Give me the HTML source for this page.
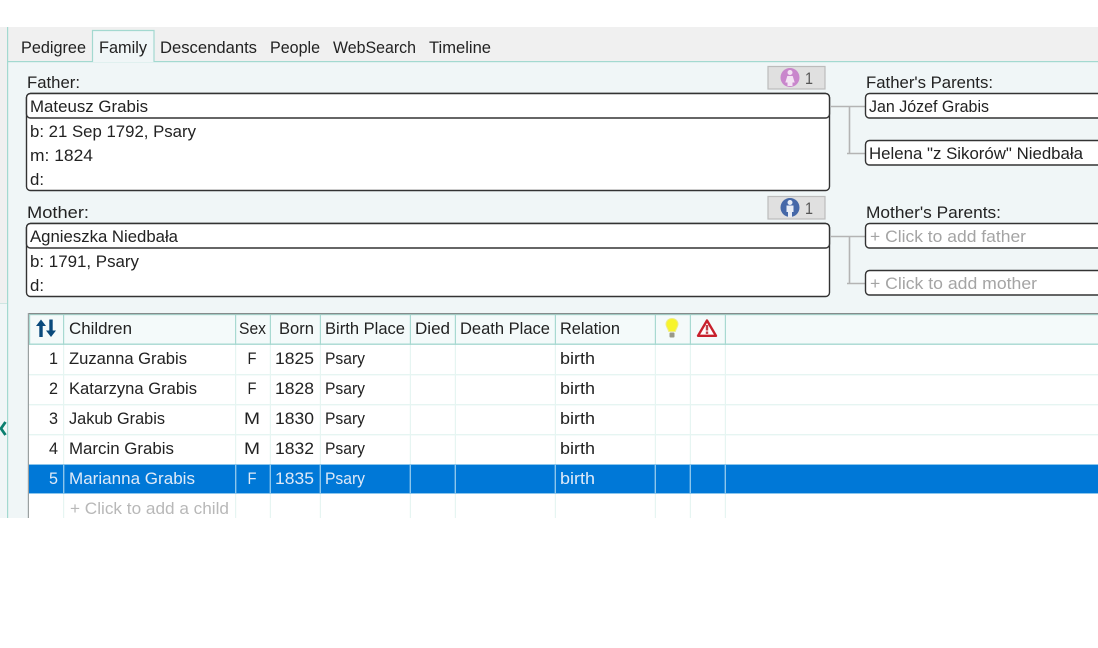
<!DOCTYPE html>
<html><head><meta charset="utf-8"><style>
html,body{margin:0;padding:0;background:#fff;width:1098px;height:648px;overflow:hidden}
svg{display:block}
text{font-family:"Liberation Sans",sans-serif;font-size:17px;fill:#222}
.p{fill:#a4a4a4}
.w{fill:#dfeaf8}
</style></head><body>
<svg width="1098" height="648" viewBox="0 0 1098 648" xmlns="http://www.w3.org/2000/svg">
<rect width="1098" height="648" fill="#fff"/>
<!-- backgrounds -->
<rect x="0" y="27" width="1098" height="34" fill="#f0f0f0"/>
<rect x="8" y="61" width="1090" height="457" fill="#f0f6f7"/>
<rect x="0" y="27" width="7" height="276" fill="#f0f0f0"/>
<rect x="0" y="303" width="7" height="215" fill="#f0f6f7"/>
<rect x="0" y="303" width="7" height="1" fill="#cfe6e2"/>
<rect x="7" y="27" width="1.2" height="491" fill="#a3d9d0"/>
<rect x="8" y="61" width="1090" height="1.200" fill="#a3d9d0"/>
<!-- active tab -->
<path d="M92.500 62V30.500H154V62" fill="#f0f6f7" stroke="#a3d9d0" stroke-width="1.200"/>
<text x="21" y="53" textLength="65" lengthAdjust="spacingAndGlyphs">Pedigree</text>
<text x="99" y="53" textLength="48" lengthAdjust="spacingAndGlyphs">Family</text>
<text x="160" y="53" textLength="97" lengthAdjust="spacingAndGlyphs">Descendants</text>
<text x="270" y="53" textLength="50" lengthAdjust="spacingAndGlyphs">People</text>
<text x="333" y="53" textLength="83" lengthAdjust="spacingAndGlyphs">WebSearch</text>
<text x="429" y="53" textLength="62" lengthAdjust="spacingAndGlyphs">Timeline</text>

<!-- Father -->
<text x="27" y="88" textLength="53" lengthAdjust="spacingAndGlyphs">Father:</text>
<rect x="26.500" y="93.500" width="803" height="97" rx="4" fill="#fff" stroke="#333" stroke-width="1.400"/>
<rect x="26.500" y="93.500" width="803" height="24.500" rx="4" fill="#fff" stroke="#333" stroke-width="1.400"/>
<text x="30" y="112" textLength="118" lengthAdjust="spacingAndGlyphs">Mateusz Grabis</text>
<text x="30" y="137" textLength="166" lengthAdjust="spacingAndGlyphs">b: 21 Sep 1792, Psary</text>
<text x="30" y="161" textLength="63" lengthAdjust="spacingAndGlyphs">m: 1824</text>
<text x="30" y="185" textLength="14" lengthAdjust="spacingAndGlyphs">d:</text>
<rect x="768" y="66.500" width="57" height="22.500" fill="#e0e0e0" stroke="#bcbcbc" stroke-width="1.200"/>
<circle cx="790" cy="77.500" r="9.500" fill="#c986cc"/>
<circle cx="790" cy="72.500" r="2.500" fill="#f3e3f3"/>
<path d="M787.300 76h5.400l2 6.500h-2.200v3.500h-5v-3.500h-2.200z" fill="#f3e3f3"/>
<text x="805" y="84" textLength="8" lengthAdjust="spacingAndGlyphs" style="fill:#555">1</text>

<!-- Father's parents -->
<text x="866" y="88" textLength="127" lengthAdjust="spacingAndGlyphs">Father's Parents:</text>
<path d="M831 106.500H865M849.500 106.500V153.500M847 153.500H865" fill="none" stroke="#b4b4b4" stroke-width="1.600"/>
<rect x="865.500" y="93.500" width="260" height="24.500" rx="4" fill="#fff" stroke="#333" stroke-width="1.400"/>
<rect x="865.500" y="140.500" width="260" height="24.500" rx="4" fill="#fff" stroke="#333" stroke-width="1.400"/>
<text x="869" y="112" textLength="120" lengthAdjust="spacingAndGlyphs">Jan Józef Grabis</text>
<text x="869" y="159" textLength="214" lengthAdjust="spacingAndGlyphs">Helena "z Sikorów" Niedbała</text>

<!-- Mother -->
<text x="27" y="218" textLength="62" lengthAdjust="spacingAndGlyphs">Mother:</text>
<rect x="26.500" y="223.500" width="803" height="73" rx="4" fill="#fff" stroke="#333" stroke-width="1.400"/>
<rect x="26.500" y="223.500" width="803" height="24.500" rx="4" fill="#fff" stroke="#333" stroke-width="1.400"/>
<text x="30" y="242" textLength="148" lengthAdjust="spacingAndGlyphs">Agnieszka Niedbała</text>
<text x="30" y="267" textLength="109" lengthAdjust="spacingAndGlyphs">b: 1791, Psary</text>
<text x="30" y="291" textLength="14" lengthAdjust="spacingAndGlyphs">d:</text>
<rect x="768" y="196.500" width="57" height="22.500" fill="#e0e0e0" stroke="#bcbcbc" stroke-width="1.200"/>
<circle cx="790" cy="207.500" r="9.500" fill="#4568a8"/>
<circle cx="790" cy="202.500" r="2.500" fill="#e8edf6"/>
<path d="M786.500 205.500h7v6.500h-1.500v5h-4v-5h-1.500z" fill="#e8edf6"/>
<text x="805" y="214" textLength="8" lengthAdjust="spacingAndGlyphs" style="fill:#555">1</text>

<!-- Mother's parents -->
<text x="866" y="218" textLength="135" lengthAdjust="spacingAndGlyphs">Mother's Parents:</text>
<path d="M831 236.500H865M849.500 236.500V283.500M847 283.500H865" fill="none" stroke="#b4b4b4" stroke-width="1.600"/>
<rect x="865.500" y="223.500" width="260" height="24.500" rx="4" fill="#fff" stroke="#333" stroke-width="1.400"/>
<rect x="865.500" y="270.500" width="260" height="24.500" rx="4" fill="#fff" stroke="#333" stroke-width="1.400"/>
<text class="p" x="870" y="242" textLength="156" lengthAdjust="spacingAndGlyphs">+ Click to add father</text>
<text class="p" x="870" y="289" textLength="167" lengthAdjust="spacingAndGlyphs">+ Click to add mother</text>

<!-- Table -->
<rect x="28" y="314" width="1070" height="204" fill="#fff"/>
<rect x="29" y="314" width="1069" height="30" fill="#f4fafa"/>
<rect x="28" y="465" width="1070" height="28" fill="#0078d7"/>
<g fill="#e6f5f2">
<rect x="28" y="374" width="1070" height="1.400"/>
<rect x="28" y="404" width="1070" height="1.400"/>
<rect x="28" y="434" width="1070" height="1.400"/>
<rect x="63" y="345" width="1.200" height="173"/>
<rect x="235" y="345" width="1.200" height="173"/>
<rect x="269.800" y="345" width="1.200" height="173"/>
<rect x="319.800" y="345" width="1.200" height="173"/>
<rect x="409.800" y="345" width="1.200" height="173"/>
<rect x="454.800" y="345" width="1.200" height="173"/>
<rect x="554.800" y="345" width="1.200" height="173"/>
<rect x="654.800" y="345" width="1.200" height="173"/>
<rect x="689.800" y="345" width="1.200" height="173"/>
<rect x="724.800" y="345" width="1.200" height="173"/>
</g>
<g fill="#8cc6ec">
<rect x="28" y="464" width="1070" height="1"/>
<rect x="28" y="493" width="1070" height="1"/>
<rect x="63" y="465" width="1.200" height="28"/>
<rect x="235" y="465" width="1.200" height="28"/>
<rect x="269.800" y="465" width="1.200" height="28"/>
<rect x="319.800" y="465" width="1.200" height="28"/>
<rect x="409.800" y="465" width="1.200" height="28"/>
<rect x="454.800" y="465" width="1.200" height="28"/>
<rect x="554.800" y="465" width="1.200" height="28"/>
<rect x="654.800" y="465" width="1.200" height="28"/>
<rect x="689.800" y="465" width="1.200" height="28"/>
<rect x="724.800" y="465" width="1.200" height="28"/>
</g>
<g fill="#a8d9d1">
<rect x="29" y="314" width="1069" height="1.200"/>
<rect x="28" y="343.500" width="1070" height="1.400"/>
<rect x="29" y="314" width="1.200" height="31"/>
<rect x="63" y="314" width="1.200" height="31"/>
<rect x="235" y="314" width="1.200" height="31"/>
<rect x="269.800" y="314" width="1.200" height="31"/>
<rect x="319.800" y="314" width="1.200" height="31"/>
<rect x="409.800" y="314" width="1.200" height="31"/>
<rect x="454.800" y="314" width="1.200" height="31"/>
<rect x="554.800" y="314" width="1.200" height="31"/>
<rect x="654.800" y="314" width="1.200" height="31"/>
<rect x="689.800" y="314" width="1.200" height="31"/>
<rect x="724.800" y="314" width="1.200" height="31"/>
</g>
<rect x="28" y="313" width="1070" height="1.200" fill="#858b8b"/>
<rect x="27.800" y="313" width="1.200" height="205" fill="#9aa0a0"/>

<!-- header -->
<path d="M41 319.500L36 326H39.300V337H42.700V326H46zM51 337L56 330.500H52.700V319.500H49.300V330.500H46z" fill="#0a4a7c"/>
<text x="69" y="334" textLength="63" lengthAdjust="spacingAndGlyphs">Children</text>
<text x="239" y="334" textLength="27" lengthAdjust="spacingAndGlyphs">Sex</text>
<text x="279" y="334" textLength="35" lengthAdjust="spacingAndGlyphs">Born</text>
<text x="325" y="334" textLength="80" lengthAdjust="spacingAndGlyphs">Birth Place</text>
<text x="415" y="334" textLength="35" lengthAdjust="spacingAndGlyphs">Died</text>
<text x="460" y="334" textLength="90" lengthAdjust="spacingAndGlyphs">Death Place</text>
<text x="560" y="334" textLength="60" lengthAdjust="spacingAndGlyphs">Relation</text>
<!-- bulb -->
<path d="M672 318.500c-3.800 0-6 2.800-6 5.800 0 2.700 2 4 2.700 7.200h6.600c.7-3.200 2.700-4.500 2.700-7.200 0-3-2.200-5.800-6-5.800z" fill="#f7f42c" stroke="#eeeb8a" stroke-width="1"/>
<rect x="669.500" y="332.500" width="5" height="5" rx="1" fill="#99998a"/>
<!-- warning -->
<path d="M707 320.500L716 335.800H698z" fill="#fff" stroke="#c8202c" stroke-width="2.400" stroke-linejoin="round"/>
<rect x="705.800" y="325" width="2.400" height="5.500" fill="#c04048"/>
<rect x="705.800" y="331.500" width="2.400" height="2.400" fill="#c04048"/>

<!-- rows -->
<text x="49" y="364" textLength="9" lengthAdjust="spacingAndGlyphs">1</text>
<text x="69" y="364" textLength="118" lengthAdjust="spacingAndGlyphs">Zuzanna Grabis</text>
<text x="247.500" y="364" textLength="9" lengthAdjust="spacingAndGlyphs">F</text>
<text x="275" y="364" textLength="39" lengthAdjust="spacingAndGlyphs">1825</text>
<text x="325" y="364" textLength="40" lengthAdjust="spacingAndGlyphs">Psary</text>
<text x="560" y="364" textLength="35" lengthAdjust="spacingAndGlyphs">birth</text>

<text x="49" y="394" textLength="9" lengthAdjust="spacingAndGlyphs">2</text>
<text x="69" y="394" textLength="128" lengthAdjust="spacingAndGlyphs">Katarzyna Grabis</text>
<text x="247.500" y="394" textLength="9" lengthAdjust="spacingAndGlyphs">F</text>
<text x="275" y="394" textLength="39" lengthAdjust="spacingAndGlyphs">1828</text>
<text x="325" y="394" textLength="40" lengthAdjust="spacingAndGlyphs">Psary</text>
<text x="560" y="394" textLength="35" lengthAdjust="spacingAndGlyphs">birth</text>

<text x="49" y="424" textLength="9" lengthAdjust="spacingAndGlyphs">3</text>
<text x="69" y="424" textLength="96" lengthAdjust="spacingAndGlyphs">Jakub Grabis</text>
<text x="244" y="424" textLength="16" lengthAdjust="spacingAndGlyphs">M</text>
<text x="275" y="424" textLength="39" lengthAdjust="spacingAndGlyphs">1830</text>
<text x="325" y="424" textLength="40" lengthAdjust="spacingAndGlyphs">Psary</text>
<text x="560" y="424" textLength="35" lengthAdjust="spacingAndGlyphs">birth</text>

<text x="49" y="454" textLength="9" lengthAdjust="spacingAndGlyphs">4</text>
<text x="69" y="454" textLength="105" lengthAdjust="spacingAndGlyphs">Marcin Grabis</text>
<text x="244" y="454" textLength="16" lengthAdjust="spacingAndGlyphs">M</text>
<text x="275" y="454" textLength="39" lengthAdjust="spacingAndGlyphs">1832</text>
<text x="325" y="454" textLength="40" lengthAdjust="spacingAndGlyphs">Psary</text>
<text x="560" y="454" textLength="35" lengthAdjust="spacingAndGlyphs">birth</text>

<text class="w" x="49" y="484" textLength="9" lengthAdjust="spacingAndGlyphs">5</text>
<text class="w" x="69" y="484" textLength="126" lengthAdjust="spacingAndGlyphs">Marianna Grabis</text>
<text class="w" x="247.500" y="484" textLength="9" lengthAdjust="spacingAndGlyphs">F</text>
<text class="w" x="275" y="484" textLength="39" lengthAdjust="spacingAndGlyphs">1835</text>
<text class="w" x="325" y="484" textLength="40" lengthAdjust="spacingAndGlyphs">Psary</text>
<text class="w" x="560" y="484" textLength="35" lengthAdjust="spacingAndGlyphs">birth</text>

<text x="70" y="514" textLength="159" lengthAdjust="spacingAndGlyphs" style="fill:#b8b8b8">+ Click to add a child</text>

<!-- chevron -->
<path d="M5.500 422L1 428.500L5.500 435" fill="none" stroke="#0a7f6f" stroke-width="2.800"/>

<!-- clip everything below content -->
<rect x="0" y="518" width="1098" height="130" fill="#fff"/>
</svg>
</body></html>
